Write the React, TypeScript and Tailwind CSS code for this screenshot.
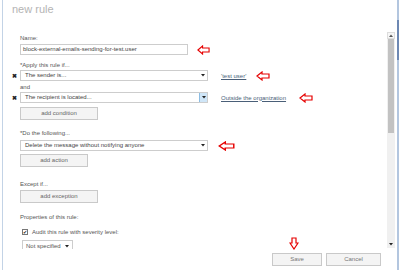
const font = { fontFamily: '"Liberation Sans", Arial, sans-serif' };

const LeftArrow = ({ w = 14, h = 10 }: { w?: number; h?: number }) => (
  <svg width={w} height={h} viewBox="0 0 14 10" preserveAspectRatio="none">
    <path
      d="M1 5 L6 1 L6 3 L13 3 L13 7 L6 7 L6 9 Z"
      fill="white"
      stroke="#e60000"
      strokeWidth="1.2"
      strokeLinejoin="miter"
    />
  </svg>
);

const Caret = () => (
  <svg width="4" height="3" viewBox="0 0 4 3">
    <path d="M0 0 L4 0 L2 2.5 Z" fill="#222" />
  </svg>
);

const Select = ({ text, hover = false }: { text: string; hover?: boolean }) => (
  <div className="flex h-[11px] w-[188px] items-center border border-[#cdcdcd] bg-white">
    <span className="flex-1 pl-[4px] text-[6px] leading-[9px] text-[#444]">{text}</span>
    <span
      className={
        hover
          ? "flex h-full w-[8px] items-center justify-center border-l border-[#8cbde3] bg-[#cfe6f8]"
          : "flex h-full w-[8px] items-center justify-center"
      }
    >
      <Caret />
    </span>
  </div>
);

const Button = ({ label, w }: { label: string; w: string }) => (
  <div
    className={`flex h-[13px] ${w} items-center justify-center border border-[#c9c9c9] bg-[#f4f4f4] text-[6px] text-[#666]`}
  >
    {label}
  </div>
);

const Label = ({ text, mt }: { text: string; mt: string }) => (
  <div className={`${mt} h-[8px] text-[6px] leading-[8px] text-[#555]`}>{text}</div>
);

const ConditionRow = ({
  cond,
  link,
  hover,
  arrowGap,
}: {
  cond: string;
  link: string;
  hover?: boolean;
  arrowGap: string;
}) => (
  <div className="-ml-[8px] flex h-[11px] items-center">
    <span className="w-[8px] text-[6px] font-bold leading-none text-[#222]">✖</span>
    <Select text={cond} hover={hover} />
    <span className="ml-[13px] text-[6px] leading-none text-[#4a5f78] underline">{link}</span>
    <span className={`${arrowGap} flex`}>
      <LeftArrow />
    </span>
  </div>
);

export default function App() {
  return (
    <div className="relative flex h-[270px] w-[400px] overflow-hidden bg-white" style={font}>
      {/* left edge */}
      <div className="ml-[2px] w-[1px] bg-[#c3d3e6]" />

      <div className="flex flex-1 flex-col">
        <div className="h-[30px] pl-[9px] pt-[2px] text-[11px] leading-[14px] text-[#b4b4b4]">
          new rule
        </div>

        <div className="flex h-[219px] overflow-hidden">
          <div className="flex-1 overflow-hidden pl-[17px]">
            <Label text="Name:" mt="mt-[4px]" />
            <div className="mt-[2px] flex items-center">
              <div className="flex h-[11px] w-[168px] items-center border border-[#cdcdcd] pl-[2px] text-[6px] text-[#444]">
                block-external-emails-sending-for-test.user
              </div>
              <span className="ml-[9px] flex">
                <LeftArrow w={13} h={10} />
              </span>
            </div>

            <Label text="*Apply this rule if..." mt="mt-[6px]" />
            <div className="mt-[1px]">
              <ConditionRow cond="The sender is..." link="'test user'" arrowGap="ml-[10px]" />
            </div>
            <Label text="and" mt="mt-[2px]" />
            <div className="mt-[1px]">
              <ConditionRow
                cond="The recipient is located..."
                link="Outside the organization"
                hover
                arrowGap="ml-[13px]"
              />
            </div>
            <div className="mt-[4px]">
              <Button label="add condition" w="w-[78px]" />
            </div>

            <Label text="*Do the following..." mt="mt-[9px]" />
            <div className="mt-[3px] flex items-center">
              <Select text="Delete the message without notifying anyone" />
              <span className="ml-[10px] flex">
                <LeftArrow w={17} h={10} />
              </span>
            </div>
            <div className="mt-[3px]">
              <Button label="add action" w="w-[68px]" />
            </div>

            <Label text="Except if..." mt="mt-[13px]" />
            <div className="mt-[2px]">
              <Button label="add exception" w="w-[78px]" />
            </div>

            <Label text="Properties of this rule:" mt="mt-[10px]" />
            <div className="mt-[7px] flex h-[8px] items-center pl-[2px]">
              <span className="flex h-[6px] w-[6px] items-center justify-center border border-[#777] bg-white text-[5px] leading-none text-[#222]">
                ✔
              </span>
              <span className="ml-[4px] text-[6px] text-[#555]">Audit this rule with severity level:</span>
            </div>
            <div className="mt-[4px] ml-[2px] flex h-[12px] w-[51px] items-center border border-[#cdcdcd]">
              <span className="flex-1 pl-[3px] text-[6px] text-[#555]">Not specified</span>
              <span className="mr-[3px] flex">
                <Caret />
              </span>
            </div>
          </div>

          {/* scrollbar */}
          <div className="mt-[2px] mb-[1px] flex w-[8px] flex-col bg-[#f0f0f0]">
            <div className="flex h-[7px] items-center justify-center border border-[#dcdcdc] bg-[#f6f6f6]">
              <svg width="4" height="3" viewBox="0 0 4 3">
                <path d="M0 3 L4 3 L2 0.5 Z" fill="#555" />
              </svg>
            </div>
            <div className="mx-[1px] h-[94px] bg-[#c2c2c2]" />
            <div className="flex-1" />
            <div className="flex h-[8px] items-center justify-center">
              <Caret />
            </div>
          </div>
          <div className="w-[1px]" />
        </div>

        <div className="flex flex-1 justify-end pr-[15px] pt-[4px]">
          <div className="flex h-[13px] w-[50px] items-center justify-center border border-[#c9c9c9] bg-[#f4f4f4] text-[6px] text-[#777]">
            Save
          </div>
          <div className="ml-[4px] flex h-[13px] w-[55px] items-center justify-center border border-[#c9c9c9] bg-[#f4f4f4] text-[6px] text-[#777]">
            Cancel
          </div>
        </div>
      </div>

      {/* right edge */}
      <div className="ml-[1px] mr-[1px] flex w-[2px] flex-col">
        <div className="h-[20px] bg-[#b3c6df]" />
        <div className="h-[40px] bg-[#6d88b3]" />
        <div className="flex-1 bg-[#b3c6df]" />
      </div>

      {/* annotation arrow over save */}
      <div className="absolute left-[289px] top-[237px]">
        <svg width="10" height="13" viewBox="0 0 10 13">
          <path
            d="M3 1 L7 1 L7 6 L9 6 L5 12 L1 6 L3 6 Z"
            fill="white"
            stroke="#e60000"
            strokeWidth="1.2"
          />
        </svg>
      </div>
    </div>
  );
}
